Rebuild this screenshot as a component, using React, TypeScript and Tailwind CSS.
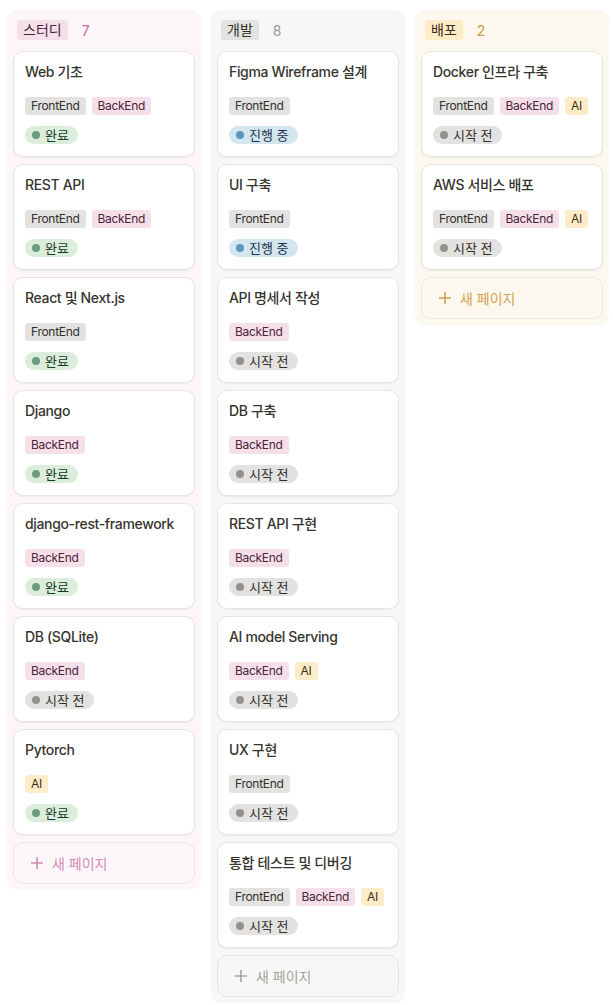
import React from "react";

type Tag = "FrontEnd" | "BackEnd" | "AI";
type Status = "완료" | "진행 중" | "시작 전";
type Card = { title: string; tags: Tag[]; status: Status };

const tagCls: Record<Tag, string> = {
  FrontEnd: "bg-[#e3e2e0] text-[#32302c]",
  BackEnd: "bg-[#f5e0e9] text-[#4c2337]",
  AI: "bg-[#fdecc8] text-[#402c1b]",
};

const statusCls: Record<Status, { bg: string; dot: string; text: string }> = {
  "완료": { bg: "bg-[#dbeddb]", dot: "bg-[#6c9b7d]", text: "text-[#1c3829]" },
  "진행 중": { bg: "bg-[#d3e5ef]", dot: "bg-[#5b97bd]", text: "text-[#183347]" },
  "시작 전": { bg: "bg-[#e3e2e0]", dot: "bg-[#91918e]", text: "text-[#32302c]" },
};

type Group = {
  name: string;
  count: number;
  colBg: string;
  tagBg: string;
  tagText: string;
  countText: string;
  addText: string;
  cards: Card[];
};

const groups: Group[] = [
  {
    name: "스터디",
    count: 7,
    colBg: "bg-[#fcf6f9]",
    tagBg: "bg-[#f5e0e9]",
    tagText: "text-[#4c2337]",
    countText: "text-[#c9659d]",
    addText: "text-[#d08db3]",
    cards: [
      { title: "Web 기초", tags: ["FrontEnd", "BackEnd"], status: "완료" },
      { title: "REST API", tags: ["FrontEnd", "BackEnd"], status: "완료" },
      { title: "React 및 Next.js", tags: ["FrontEnd"], status: "완료" },
      { title: "Django", tags: ["BackEnd"], status: "완료" },
      { title: "django-rest-framework", tags: ["BackEnd"], status: "완료" },
      { title: "DB (SQLite)", tags: ["BackEnd"], status: "시작 전" },
      { title: "Pytorch", tags: ["AI"], status: "완료" },
    ],
  },
  {
    name: "개발",
    count: 8,
    colBg: "bg-[#f7f7f5]",
    tagBg: "bg-[#e3e2e0]",
    tagText: "text-[#32302c]",
    countText: "text-[#9b9a97]",
    addText: "text-[#a5a4a0]",
    cards: [
      { title: "Figma Wireframe 설계", tags: ["FrontEnd"], status: "진행 중" },
      { title: "UI 구축", tags: ["FrontEnd"], status: "진행 중" },
      { title: "API 명세서 작성", tags: ["BackEnd"], status: "시작 전" },
      { title: "DB 구축", tags: ["BackEnd"], status: "시작 전" },
      { title: "REST API 구현", tags: ["BackEnd"], status: "시작 전" },
      { title: "AI model Serving", tags: ["BackEnd", "AI"], status: "시작 전" },
      { title: "UX 구현", tags: ["FrontEnd"], status: "시작 전" },
      { title: "통합 테스트 및 디버깅", tags: ["FrontEnd", "BackEnd", "AI"], status: "시작 전" },
    ],
  },
  {
    name: "배포",
    count: 2,
    colBg: "bg-[#fcf8ef]",
    tagBg: "bg-[#fdecc8]",
    tagText: "text-[#402c1b]",
    countText: "text-[#d09a45]",
    addText: "text-[#d6a04e]",
    cards: [
      { title: "Docker 인프라 구축", tags: ["FrontEnd", "BackEnd", "AI"], status: "시작 전" },
      { title: "AWS 서비스 배포", tags: ["FrontEnd", "BackEnd", "AI"], status: "시작 전" },
    ],
  },
];

function CardView({ card }: { card: Card }) {
  const s = statusCls[card.status];
  return (
    <div className="bg-white rounded-[10px] border border-[#e6e5e3] shadow-[0_1px_2px_rgba(0,0,0,0.06)] px-[11px] pt-[10px] pb-[11px] h-[106px] flex flex-col">
      <div className="h-[20px] leading-[20px] text-[14px] font-medium tracking-[-0.35px] text-[#37352f] whitespace-nowrap">
        {card.title}
      </div>
      <div className="mt-[15px] flex gap-[6px] h-[18px]">
        {card.tags.map((t) => (
          <span
            key={t}
            className={`${tagCls[t]} h-[18px] leading-[18px] px-[6px] rounded-[3px] text-[12px] tracking-[-0.3px]`}
          >
            {t}
          </span>
        ))}
      </div>
      <div className="mt-[11px] flex">
        <span
          className={`${s.bg} ${s.text} h-[18px] leading-[18px] pl-[7px] pr-[9px] rounded-full text-[12px] flex items-center gap-[5px]`}
        >
          <span className={`${s.dot} w-[8px] h-[8px] rounded-full inline-block`} />
          <span className="text-[13px]">{card.status}</span>
        </span>
      </div>
    </div>
  );
}

function Column({ g }: { g: Group }) {
  return (
    <div className={`${g.colBg} w-[194px] rounded-[10px] px-[6px] pt-[10px] pb-[6px] flex flex-col self-start`}>
      <div className="h-[20px] flex items-center pl-[4px] mb-[11px]">
        <span className={`${g.tagBg} ${g.tagText} h-[20px] leading-[20px] px-[6px] rounded-[3px] text-[14px]`}>
          {g.name}
        </span>
        <span className={`${g.countText} ml-[14px] text-[14px]`}>{g.count}</span>
      </div>
      <div className="flex flex-col gap-[7px]">
        {g.cards.map((c) => (
          <CardView key={c.title} card={c} />
        ))}
        <div className={`${g.addText} h-[42px] rounded-[10px] border border-[rgba(0,0,0,0.07)] flex items-center pl-[16px] gap-[8px] text-[14px]`}>
          <svg width="14" height="14" viewBox="0 0 14 14" fill="none">
            <path d="M7 1v12M1 7h12" stroke="currentColor" strokeWidth="1.6" />
          </svg>
          <span>새 페이지</span>
        </div>
      </div>
    </div>
  );
}

export default function App() {
  return (
    <div
      className="w-[613px] h-[1005px] bg-white pl-[7px] pt-[10px] flex gap-[10px] overflow-hidden"
      style={{ fontFamily: 'Inter, "Noto Sans CJK KR", sans-serif' }}
    >
      {groups.map((g) => (
        <Column key={g.name} g={g} />
      ))}
    </div>
  );
}
